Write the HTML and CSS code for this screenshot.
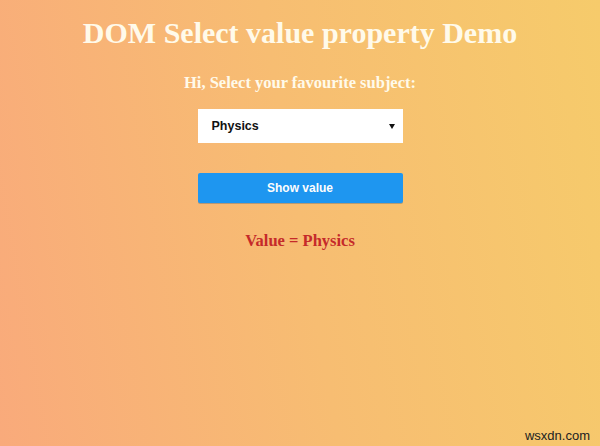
FILE: index.html
```html
<!DOCTYPE html>
<html>
<head>
<meta charset="utf-8">
<link rel="stylesheet" href="styles.css">
</head>
<body>
<main class="page">
  <h1 class="title">DOM Select value property Demo</h1>
  <h3 class="subtitle">Hi, Select your favourite subject:</h3>
  <div class="select">
    <span class="select-text">Physics</span>
    <span class="select-arrow"></span>
  </div>
  <button class="btn">Show value</button>
  <p class="result">Value = Physics</p>
  <footer class="footer"><span class="watermark">wsxdn.com</span></footer>
</main>
</body>
</html>
```
FILE: styles.css
```css
html, body {
  margin: 0;
  padding: 0;
}
body {
  width: 600px;
  height: 446px;
  overflow: hidden;
  background: linear-gradient(80deg, #f9aa7b 0%, #f7bd72 50%, #f6cb6b 100%);
}
.page {
  height: 446px;
  display: flex;
  flex-direction: column;
  align-items: center;
  font-family: "Liberation Serif", "Times New Roman", serif;
}
.title {
  margin: 16px 0 0;
  font-size: 30px;
  line-height: 34px;
  font-weight: bold;
  color: #fffaea;
  white-space: nowrap;
}
.subtitle {
  margin: 23px 0 0;
  font-size: 16.5px;
  line-height: 20px;
  font-weight: bold;
  color: #fffaea;
}
.select {
  margin-top: 16px;
  width: 205px;
  height: 34px;
  box-sizing: border-box;
  background: #ffffff;
  display: flex;
  align-items: center;
  justify-content: space-between;
  padding: 0 8px 0 14px;
  font-family: "Liberation Sans", Arial, sans-serif;
  font-size: 12.5px;
  font-weight: bold;
  color: #111;
}
.select-arrow {
  width: 0;
  height: 0;
  border-left: 3px solid transparent;
  border-right: 3px solid transparent;
  border-top: 5px solid #111;
}
.btn {
  margin-top: 30px;
  width: 205px;
  height: 30px;
  border: none;
  border-radius: 2px;
  background: #1e96f0;
  color: #fdfdfd;
  font-family: "Liberation Sans", Arial, sans-serif;
  font-size: 12px;
  font-weight: bold;
  padding: 0;
  box-shadow: 0 1px 0 rgba(60, 90, 120, 0.35);
}
.result {
  margin: 28px 0 0;
  font-size: 16.5px;
  line-height: 20px;
  font-weight: bold;
  color: #c52a2a;
}
.footer {
  margin-top: auto;
  align-self: stretch;
  display: flex;
  justify-content: flex-end;
  padding: 0 10px 3px 0;
}
.watermark {
  font-family: "Liberation Sans", Arial, sans-serif;
  font-size: 13px;
  color: #222;
}
```
